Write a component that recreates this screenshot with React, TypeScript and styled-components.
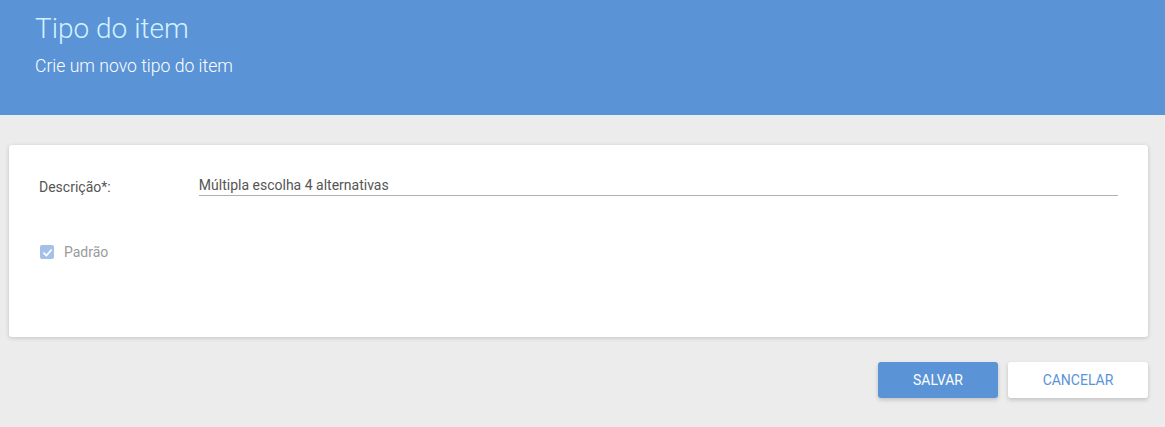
import { createGlobalStyle, styled } from "styled-components";

const GlobalStyle = createGlobalStyle`
  html, body {
    margin: 0;
    padding: 0;
    background: #ececec;
    font-family: Roboto, "Liberation Sans", sans-serif;
  }
`;

export default function App() {
  return (
    <>
      <GlobalStyle />
      <Page>
        <Header>
          <Title>Tipo do item</Title>
          <Subtitle>Crie um novo tipo do item</Subtitle>
        </Header>
        <Content>
          <Card>
            <FieldRow>
              <Label>Descrição*:</Label>
              <Input defaultValue="Múltipla escolha 4 alternativas" />
            </FieldRow>
            <CheckRow>
              <CheckBox>
                <svg width="11" height="11" viewBox="0 0 10 10">
                  <path d="M1.3 5.2 L4 7.8 L8.8 2.3" fill="none" stroke="#fff" strokeWidth="1.6" />
                </svg>
              </CheckBox>
              <CheckLabel>Padrão</CheckLabel>
            </CheckRow>
          </Card>
          <Actions>
            <Button $primary>SALVAR</Button>
            <Button $wide>CANCELAR</Button>
          </Actions>
        </Content>
      </Page>
    </>
  );
}

const Page = styled.div`
  min-height: 427px;
  background: #ececec;
`;

const Header = styled.header`
  height: 115px;
  box-sizing: border-box;
  background: #5a93d6;
  padding: 11px 35px 0;
`;

const Title = styled.h1`
  margin: 0;
  font-size: 28px;
  font-weight: 300;
  line-height: 36px;
  color: #d2f1ff;
`;

const Subtitle = styled.p`
  margin: 8px 0 0;
  font-size: 17.6px;
  font-weight: 300;
  line-height: 22px;
  color: #ffffff;
`;

const Content = styled.main`
  padding: 30px 17px 0 9px;
`;

const Card = styled.section`
  height: 192px;
  box-sizing: border-box;
  background: #fff;
  border-radius: 3px;
  box-shadow: 0 1px 4px rgba(0, 0, 0, 0.18);
  padding: 31px 30px 0;
`;

const FieldRow = styled.div`
  display: flex;
  align-items: flex-end;
  height: 20px;
`;

const Label = styled.label`
  width: 160px;
  font-size: 14px;
  color: #555;
  line-height: 18px;
`;

const Input = styled.input`
  width: 920px;
  border: none;
  border-bottom: 1px solid #b0b0b0;
  outline: none;
  padding: 0 0 2px;
  font-family: Roboto, "Liberation Sans", sans-serif;
  font-size: 14px;
  color: #555;
  background: transparent;
`;

const CheckRow = styled.div`
  display: flex;
  align-items: center;
  gap: 10px;
  margin-top: 48px;
  padding-left: 1px;
`;

const CheckBox = styled.span`
  width: 14px;
  height: 14px;
  border-radius: 2px;
  background: #a3c0e8;
  display: flex;
  align-items: center;
  justify-content: center;
`;

const CheckLabel = styled.span`
  font-size: 14px;
  color: #9a9a9a;
`;

const Actions = styled.div`
  display: flex;
  justify-content: flex-end;
  gap: 10px;
  margin-top: 25px;
`;

const Button = styled.button<{ $primary?: boolean; $wide?: boolean }>`
  width: ${(p) => (p.$wide ? "140px" : "120px")};
  height: 36px;
  border: none;
  border-radius: 3px;
  font-family: Roboto, "Liberation Sans", sans-serif;
  font-size: 14px;
  background: ${(p) => (p.$primary ? "#5a93d6" : "#fff")};
  color: ${(p) => (p.$primary ? "#fff" : "#5a93d6")};
  box-shadow: 0 2px 4px rgba(0, 0, 0, 0.18);
  cursor: pointer;
`;
